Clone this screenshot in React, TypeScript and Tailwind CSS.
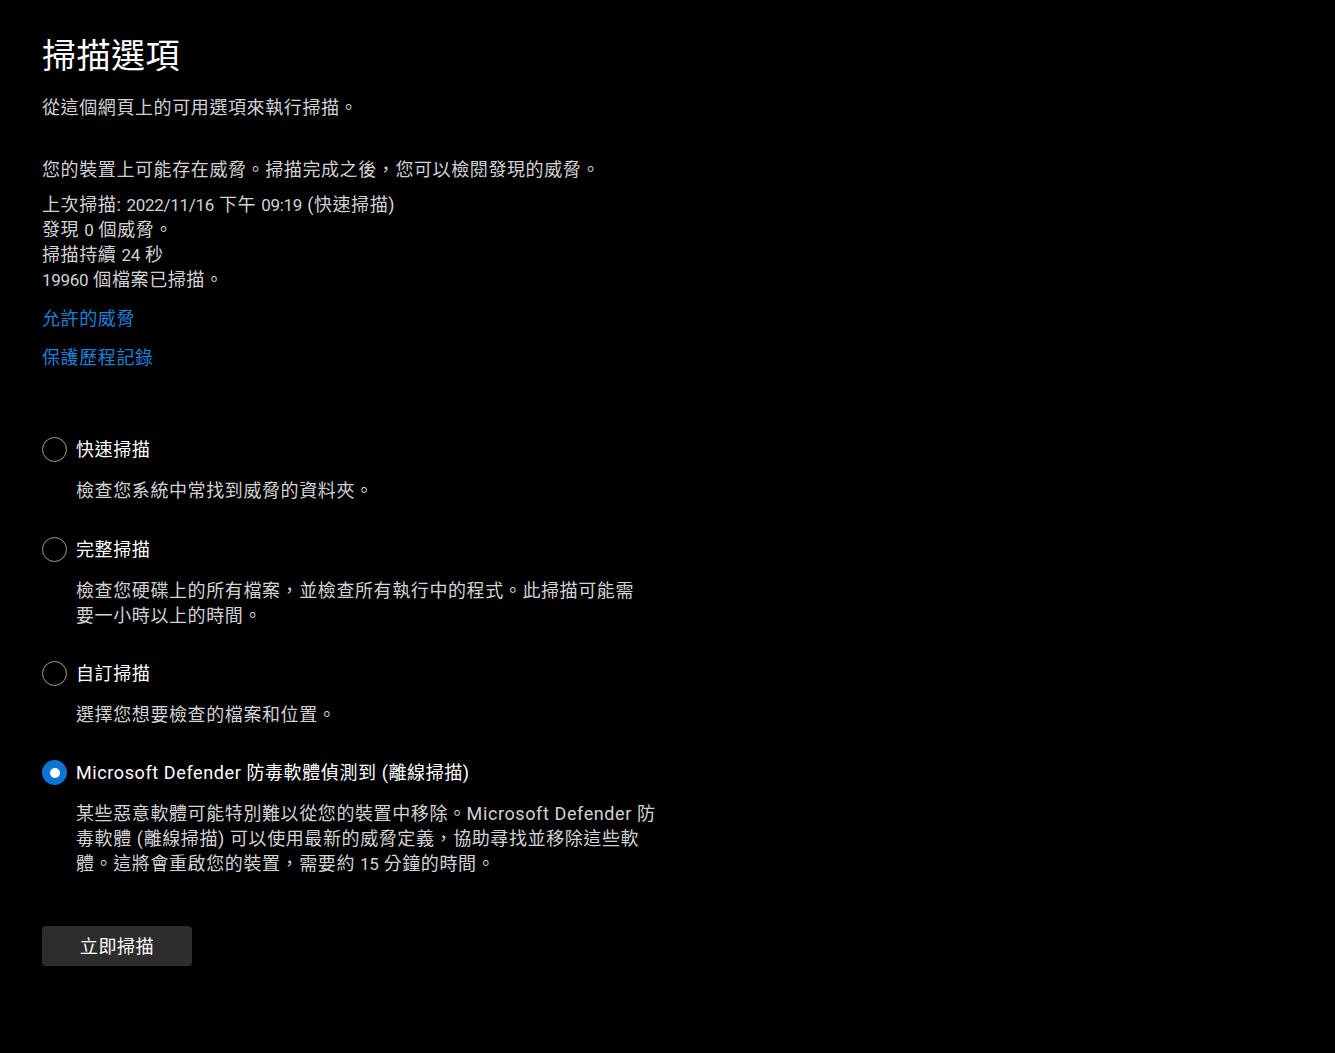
import type { ReactNode } from "react";

const fontStack = "font-['Roboto','Noto_Sans_CJK_TC',sans-serif]";

// digits in the original UI font are narrower than Roboto's
const N = ({ children }: { children: ReactNode }) => (
  <span className="text-[17px] leading-none tracking-[-0.3px]">{children}</span>
);

type Option = {
  label: ReactNode;
  lines: ReactNode[];
  checked?: boolean;
  gap: string;
};

const options: Option[] = [
  { label: "快速掃描", lines: ["檢查您系統中常找到威脅的資料夾。"], gap: "mt-[67px]" },
  {
    label: "完整掃描",
    lines: ["檢查您硬碟上的所有檔案，並檢查所有執行中的程式。此掃描可能需", "要一小時以上的時間。"],
    gap: "mt-[34px]",
  },
  { label: "自訂掃描", lines: ["選擇您想要檢查的檔案和位置。"], gap: "mt-[33px]" },
  {
    label: "Microsoft Defender 防毒軟體偵測到 (離線掃描)",
    lines: [
      "某些惡意軟體可能特別難以從您的裝置中移除。Microsoft Defender 防",
      "毒軟體 (離線掃描) 可以使用最新的威脅定義，協助尋找並移除這些軟",
      <>
        體。這將會重啟您的裝置，需要約 <N>15</N> 分鐘的時間。
      </>,
    ],
    checked: true,
    gap: "mt-[33px]",
  },
];

const Radio = ({ checked }: { checked?: boolean }) =>
  checked ? (
    <span className="flex h-[25px] w-[25px] shrink-0 items-center justify-center rounded-full bg-[#0b74d6]">
      <span className="h-[10px] w-[10px] rounded-full bg-white" />
    </span>
  ) : (
    <span className="h-[25px] w-[25px] shrink-0 rounded-full border-[1.5px] border-[#9a9a9a]" />
  );

export default function App() {
  return (
    <div className={`min-h-[1053px] w-full bg-black pl-[42px] pt-[32px] text-[18px] tracking-[0.6px] text-[#d2d2d2] ${fontStack}`}>
      <h1 className="h-[48px] text-[34px] leading-[48px] font-normal tracking-[0.5px] text-white">掃描選項</h1>
      <p className="mt-[15px] leading-[25px]">從這個網頁上的可用選項來執行掃描。</p>

      <p className="mt-[37px] leading-[25px]">您的裝置上可能存在威脅。掃描完成之後，您可以檢閱發現的威脅。</p>
      <div className="mt-[10px] leading-[25px]">
        <div className="h-[25px]">
          上次掃描: <N>2022/11/16</N> 下午 <N>09:19</N> (快速掃描)
        </div>
        <div className="h-[25px]">
          發現 <N>0</N> 個威脅。
        </div>
        <div className="h-[25px]">
          掃描持續 <N>24</N> 秒
        </div>
        <div className="h-[25px]">
          <N>19960</N> 個檔案已掃描。
        </div>
      </div>

      <div className="mt-[14px] leading-[25px] text-[#1b80d8]">允許的威脅</div>
      <div className="mt-[14px] leading-[25px] text-[#1b80d8]">保護歷程記錄</div>

      {options.map((o, i) => (
        <div key={i} className={o.gap}>
          <label className="flex h-[25px] items-center gap-[9px] text-white">
            <Radio checked={o.checked} />
            <span className="leading-[25px]">{o.label}</span>
          </label>
          <div className="mt-[16px] pl-[34px] leading-[25px]">
            {o.lines.map((l, j) => (
              <div key={j} className="h-[25px] whitespace-nowrap">
                {l}
              </div>
            ))}
          </div>
        </div>
      ))}

      <button className="mt-[50px] h-[40px] w-[150px] rounded-[4px] bg-[#2d2d2d] text-[18px] text-white">
        立即掃描
      </button>
    </div>
  );
}
